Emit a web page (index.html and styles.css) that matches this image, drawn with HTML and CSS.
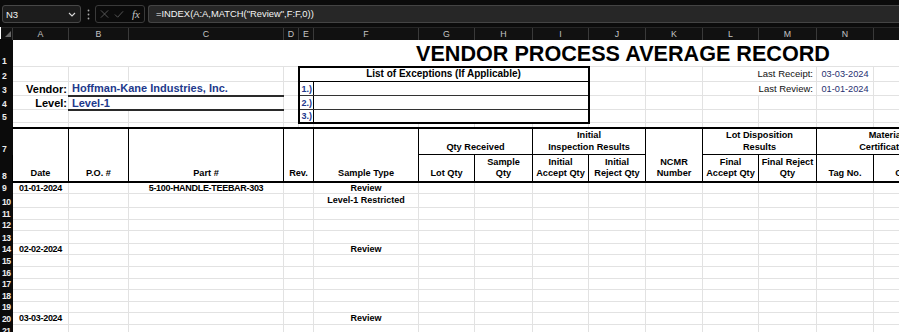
FILE: index.html
```html
<!DOCTYPE html>
<html>
<head>
  <title>Vendor Process Average Record</title>
  <meta name="viewport" content="width=device-width, initial-scale=1.0">
  <link rel="stylesheet" href="styles.css">
</head>
<body>
  <div class="formula-bar">
    <div class="name-box">
      <span>N3</span>
      <svg width="8" height="5" viewBox="0 0 8 5"><path d="M1 1 L4 4 L7 1" fill="none" stroke="#d8d8d8" stroke-width="1.1"/></svg>
    </div>
    <div class="grip">
      <svg width="3" height="11" viewBox="0 0 3 11"><circle cx="1.5" cy="1.5" r="0.9" fill="#a8a8a8"/><circle cx="1.5" cy="5.5" r="0.9" fill="#a8a8a8"/><circle cx="1.5" cy="9.5" r="0.9" fill="#a8a8a8"/></svg>
    </div>
    <div class="fx-box">
      <svg width="10" height="10" viewBox="0 0 10 10"><path d="M1 1 L9 9 M9 1 L1 9" stroke="#5e5e5e" stroke-width="1"/></svg>
      <svg width="11" height="9" viewBox="0 0 11 9"><path d="M1 4.5 L4 7.5 L10 1" fill="none" stroke="#5e5e5e" stroke-width="1"/></svg>
      <span class="fx">fx</span>
    </div>
    <div class="formula">=INDEX(A:A,MATCH("Review",F:F,0))</div>
  </div>

  <table class="sheet">
    <colgroup>
      <col class="c-rh"><col class="c-a"><col class="c-b"><col class="c-c"><col class="c-d"><col class="c-e"><col class="c-f">
      <col class="c-g"><col class="c-h"><col class="c-i"><col class="c-j"><col class="c-k"><col class="c-l"><col class="c-m"><col class="c-n"><col class="c-o">
    </colgroup>
    <tr class="col-heads">
      <th class="corner"><span class="tri"></span></th>
      <th>A</th><th>B</th><th>C</th><th>D</th><th>E</th><th>F</th><th>G</th><th>H</th><th>I</th><th>J</th><th>K</th><th>L</th><th>M</th><th>N</th><th>O</th>
    </tr>
    <tr class="h27">
      <th class="rh">1</th>
      <td colspan="15" class="title">VENDOR PROCESS AVERAGE RECORD</td>
    </tr>
    <tr class="h15">
      <th class="rh">2</th>
      <td></td><td></td><td></td><td></td>
      <td colspan="5" class="exc-head">List of Exceptions (If Applicable)</td>
      <td></td><td></td>
      <td colspan="2" class="meta-label">Last Receipt:</td>
      <td class="meta-val">03-03-2024</td>
      <td></td>
    </tr>
    <tr class="h14">
      <th class="rh">3</th>
      <td class="field-label">Vendor:</td>
      <td colspan="2" class="field-val">Hoffman-Kane Industries, Inc.</td>
      <td></td>
      <td class="exc-num">1.)</td>
      <td colspan="4" class="exc-line"></td>
      <td></td><td></td>
      <td colspan="2" class="meta-label">Last Review:</td>
      <td class="meta-val">01-01-2024</td>
      <td></td>
    </tr>
    <tr class="h14">
      <th class="rh">4</th>
      <td class="field-label">Level:</td>
      <td colspan="2" class="field-val">Level-1</td>
      <td></td>
      <td class="exc-num">2.)</td>
      <td colspan="4" class="exc-line"></td>
      <td></td><td></td><td></td><td></td><td></td><td></td>
    </tr>
    <tr class="h13">
      <th class="rh">5</th>
      <td></td><td></td><td></td><td></td>
      <td class="exc-num last">3.)</td>
      <td colspan="4" class="exc-line last"></td>
      <td></td><td></td><td></td><td></td><td></td><td></td>
    </tr>
    <tr class="h5">
      <th class="rh"></th>
      <td></td><td></td><td></td><td></td><td></td><td></td><td></td><td></td><td></td><td></td><td></td><td></td><td></td><td></td><td></td>
    </tr>
    <tr class="h27 head-top">
      <th class="rh">7</th>
      <td rowspan="2" class="hd">Date</td>
      <td rowspan="2" class="hd">P.O. #</td>
      <td rowspan="2" class="hd">Part #</td>
      <td rowspan="2" colspan="2" class="hd">Rev.</td>
      <td rowspan="2" class="hd">Sample Type</td>
      <td colspan="2" class="hd grp">Qty Received</td>
      <td colspan="2" class="hd grp">Initial<br>Inspection Results</td>
      <td rowspan="2" class="hd">NCMR<br>Number</td>
      <td colspan="2" class="hd grp">Lot Disposition<br>Results</td>
      <td colspan="2" class="hd grp">Material<br>Certification</td>
    </tr>
    <tr class="h27 head-bottom">
      <th class="rh">8</th>
      <td class="hd">Lot Qty</td>
      <td class="hd">Sample<br>Qty</td>
      <td class="hd">Initial<br>Accept Qty</td>
      <td class="hd">Initial<br>Reject Qty</td>
      <td class="hd">Final<br>Accept Qty</td>
      <td class="hd">Final Reject<br>Qty</td>
      <td class="hd">Tag No.</td>
      <td class="hd">Cert. No.</td>
    </tr>
    <tr class="h11 data">
      <th class="rh">9</th>
      <td class="num">01-01-2024</td><td></td><td class="num">5-100-HANDLE-TEEBAR-303</td><td colspan="2"></td><td>Review</td>
      <td></td><td></td><td></td><td></td><td></td><td></td><td></td><td></td><td></td>
    </tr>
    <tr class="h14 data">
      <th class="rh">10</th>
      <td></td><td></td><td></td><td colspan="2"></td><td>Level-1 Restricted</td>
      <td></td><td></td><td></td><td></td><td></td><td></td><td></td><td></td><td></td>
    </tr>
    <tr class="h12 data">
      <th class="rh">11</th>
      <td></td><td></td><td></td><td colspan="2"></td><td></td>
      <td></td><td></td><td></td><td></td><td></td><td></td><td></td><td></td><td></td>
    </tr>
    <tr class="h11 data">
      <th class="rh">12</th>
      <td></td><td></td><td></td><td colspan="2"></td><td></td>
      <td></td><td></td><td></td><td></td><td></td><td></td><td></td><td></td><td></td>
    </tr>
    <tr class="h13 data">
      <th class="rh">13</th>
      <td></td><td></td><td></td><td colspan="2"></td><td></td>
      <td></td><td></td><td></td><td></td><td></td><td></td><td></td><td></td><td></td>
    </tr>
    <tr class="h11 data">
      <th class="rh">14</th>
      <td class="num">02-02-2024</td><td></td><td></td><td colspan="2"></td><td>Review</td>
      <td></td><td></td><td></td><td></td><td></td><td></td><td></td><td></td><td></td>
    </tr>
    <tr class="h12 data">
      <th class="rh">15</th>
      <td></td><td></td><td></td><td colspan="2"></td><td></td>
      <td></td><td></td><td></td><td></td><td></td><td></td><td></td><td></td><td></td>
    </tr>
    <tr class="h12 data">
      <th class="rh">16</th>
      <td></td><td></td><td></td><td colspan="2"></td><td></td>
      <td></td><td></td><td></td><td></td><td></td><td></td><td></td><td></td><td></td>
    </tr>
    <tr class="h11 data">
      <th class="rh">17</th>
      <td></td><td></td><td></td><td colspan="2"></td><td></td>
      <td></td><td></td><td></td><td></td><td></td><td></td><td></td><td></td><td></td>
    </tr>
    <tr class="h12 data">
      <th class="rh">18</th>
      <td></td><td></td><td></td><td colspan="2"></td><td></td>
      <td></td><td></td><td></td><td></td><td></td><td></td><td></td><td></td><td></td>
    </tr>
    <tr class="h11 data">
      <th class="rh">19</th>
      <td></td><td></td><td></td><td colspan="2"></td><td></td>
      <td></td><td></td><td></td><td></td><td></td><td></td><td></td><td></td><td></td>
    </tr>
    <tr class="h12 data">
      <th class="rh">20</th>
      <td class="num">03-03-2024</td><td></td><td></td><td colspan="2"></td><td>Review</td>
      <td></td><td></td><td></td><td></td><td></td><td></td><td></td><td></td><td></td>
    </tr>
    <tr class="h12 data">
      <th class="rh">21</th>
      <td></td><td></td><td></td><td colspan="2"></td><td></td>
      <td></td><td></td><td></td><td></td><td></td><td></td><td></td><td></td><td></td>
    </tr>
  </table>
</body>
</html>
```

FILE: styles.css
```css
body {
  margin: 0;
  width: 899px;
  height: 332px;
  overflow: hidden;
  background: #0b0b0b;
  font-family: "Liberation Sans", Arial, sans-serif;
}

/* formula bar */
.formula-bar {
  display: flex;
  align-items: flex-start;
  height: 27px;
  padding: 5px 0 0 2px;
  box-sizing: border-box;
}
.name-box {
  display: flex;
  align-items: center;
  justify-content: space-between;
  width: 79px;
  height: 18px;
  box-sizing: border-box;
  padding: 0 4px 0 3px;
  background: #1c1c1c;
  border: 1px solid #474747;
  border-radius: 3px;
  color: #f2f2f2;
  font-size: 9.5px;
}
.grip {
  display: flex;
  align-items: center;
  justify-content: center;
  width: 14px;
  height: 18px;
}
.fx-box {
  display: flex;
  align-items: center;
  gap: 5px;
  width: 50px;
  height: 18px;
  box-sizing: border-box;
  padding: 0 4px 0 4px;
  border: 1px solid #3a3a3a;
  border-radius: 3px;
}
.fx {
  font-family: "Liberation Serif", serif;
  font-style: italic;
  font-size: 11px;
  color: #c4c4c4;
  margin-left: 3px;
}
.formula {
  flex: 1;
  height: 18px;
  box-sizing: border-box;
  margin-left: 3px;
  padding: 0 7px;
  background: #272727;
  border: 1px solid #444;
  border-right: 0;
  border-radius: 3px 0 0 3px;
  color: #f4f4f4;
  font-size: 9.4px;
  line-height: 16px;
}

/* sheet grid */
.sheet {
  table-layout: fixed;
  border-collapse: collapse;
  width: 955px;
  background: #fff;
  font-size: 9px;
  font-weight: bold;
  color: #000;
}
.c-rh { width: 12px; }
.c-a { width: 56px; }
.c-b { width: 60px; }
.c-c { width: 155px; }
.c-d { width: 15px; }
.c-e { width: 15px; }
.c-f { width: 105px; }
.c-g { width: 56px; }
.c-h { width: 58px; }
.c-i { width: 56px; }
.c-j { width: 57px; }
.c-k { width: 57px; }
.c-l { width: 56px; }
.c-m { width: 58px; }
.c-n { width: 57px; }
.c-o { width: 82px; }

.sheet td {
  padding: 0 2px;
  border: 1px solid #e2e2e2;
  white-space: nowrap;
  overflow: hidden;
  line-height: 10px;
  text-align: center;
  vertical-align: bottom;
}
.sheet th {
  padding: 0;
  background: #0b0b0b;
  border: 1px solid #0b0b0b;
}

.col-heads th {
  height: 11px;
  background: #111;
  border: 0;
  border-left: 1px solid #3a3a3a;
  border-top: 1px solid #262626;
  color: #c4c4c4;
  font-size: 8.8px;
  font-weight: normal;
  line-height: 10px;
}
.col-heads th.corner {
  position: relative;
  border-left: 0;
}
.tri {
  position: absolute;
  right: 1px;
  bottom: 2px;
  width: 0;
  height: 0;
  border-left: 6px solid transparent;
  border-bottom: 6px solid #6a6a6a;
}
.rh {
  color: #ededed;
  font-size: 8.6px;
  text-align: left;
  vertical-align: bottom;
  line-height: 10px;
  letter-spacing: -0.5px;
  overflow: hidden;
  white-space: nowrap;
}
.sheet th.rh {
  padding-left: 1px;
}

.h5 { height: 5px; }
.h11 { height: 11px; }
.h12 { height: 12px; }
.h13 { height: 13px; }
.h14 { height: 14px; }
.h15 { height: 15px; }
.h27 { height: 27px; }

/* title & header block */
.sheet td.title {
  border: 0;
  border-bottom: 1px solid #e2e2e2;
  text-align: left;
  padding: 0 0 1px 403px;
  font-size: 21.6px;
  line-height: 22px;
}
.sheet td.field-label {
  text-align: right;
  padding-right: 1px;
  font-size: 11px;
  vertical-align: middle;
}
.sheet td.field-val {
  text-align: left;
  padding-left: 3px;
  font-size: 11px;
  color: #22398c;
  border-bottom: 2px solid #2a2a2a;
  vertical-align: middle;
}
.sheet td.exc-head {
  border: 2px solid #000;
  border-bottom: 1px solid #000;
  font-size: 10px;
  vertical-align: middle;
}
.sheet td.exc-num {
  text-align: right;
  padding-right: 1px;
  color: #22398c;
  border-left: 2px solid #000;
  border-right: 1px solid #000;
  border-bottom: 1px solid #333;
  vertical-align: middle;
}
.sheet td.exc-line {
  border-right: 2px solid #000;
  border-bottom: 1px solid #333;
}
.sheet td.last {
  border-bottom: 2px solid #000;
}
.sheet td.meta-label {
  text-align: right;
  padding-right: 3px;
  font-size: 9.5px;
  font-weight: normal;
  color: #111;
  vertical-align: middle;
}
.sheet td.meta-val {
  font-size: 9.2px;
  font-weight: normal;
  color: #1f2f70;
  vertical-align: middle;
}

/* column header block */
.sheet td.hd {
  border: 1px solid #000;
  font-size: 9.2px;
  line-height: 11.5px;
  padding-bottom: 1px;
}
.head-top td.hd {
  border-top: 2px solid #000;
}
.sheet td[rowspan].hd {
  border-bottom: 2px solid #000;
}
.head-bottom td.hd {
  border-bottom: 2px solid #000;
}

.data td {
  line-height: 10px;
  vertical-align: middle;
}
.data td.num {
  letter-spacing: -0.3px;
}
```
